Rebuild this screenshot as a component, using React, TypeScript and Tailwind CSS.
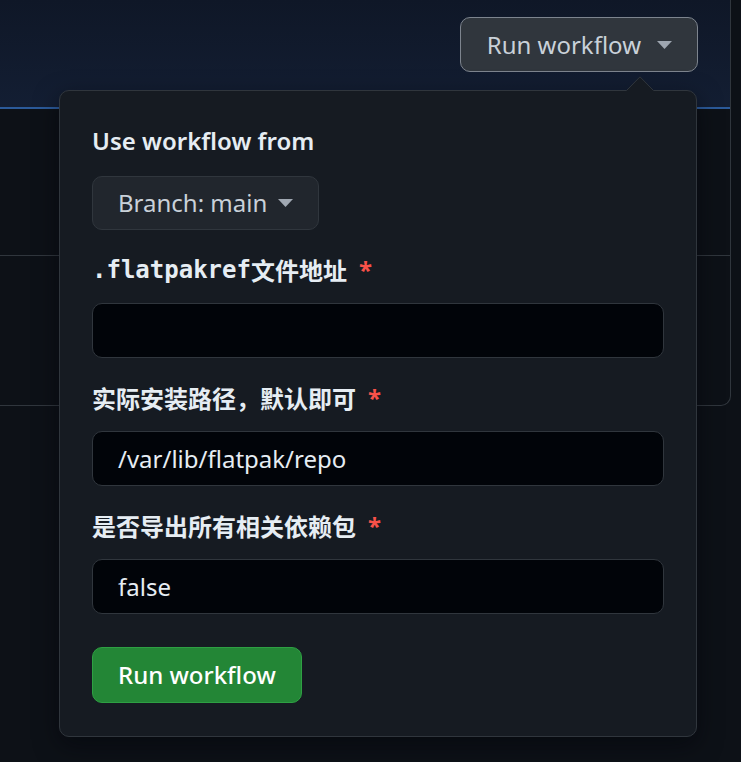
import React from "react";

function Caret({ color = "#8b949e" }: { color?: string }) {
  return (
    <svg width="15" height="8" viewBox="0 0 15 8" className="shrink-0">
      <polygon points="0,0 15,0 7.5,8" fill={color} />
    </svg>
  );
}

function Label({ children }: { children: React.ReactNode }) {
  return (
    <div className="mt-[22px] h-[36px] flex items-center text-[24px] font-bold text-[#e6edf3] leading-[36px] whitespace-nowrap">
      {children}
      <span className="ml-[12px] text-[#f85149]">*</span>
    </div>
  );
}

function Input({ value }: { value?: string }) {
  return (
    <div className="mt-[15px] h-[55px] rounded-[10px] border border-[#30363d] bg-[#010409] pl-[25px] flex items-center text-[24px] text-[#e6edf3]">
      {value}
    </div>
  );
}

export default function App() {
  return (
    <div className="relative w-[741px] h-[762px] overflow-hidden bg-[#0d1117] font-['Noto_Sans','Noto_Sans_CJK_SC',sans-serif]">
      <div className="w-[731px] border-r border-b border-[#30363d] rounded-br-[10px] overflow-hidden">
        <div className="h-[109px] bg-gradient-to-b from-[#0f1727] to-[#131e33] border-b-2 border-[#2b5a9a] flex justify-end items-start pt-[17px] pr-[32px]">
          <div className="h-[55px] rounded-[10px] border border-[#7d848e] bg-[#30363d] pl-[26px] pr-[25px] flex items-center gap-[16px] text-[24px] text-[#c9d1d9] whitespace-nowrap">
            <span>Run workflow</span>
            <Caret color="#9ea6b0" />
          </div>
        </div>
        <div className="h-[147px] border-b border-[#30363d]" />
        <div className="h-[149px]" />
      </div>

      <div className="absolute left-[59px] top-[90px] w-[638px] rounded-[10px] border border-[#30363d] bg-[#161b22] px-[32px] pt-[32px] pb-[33px] shadow-[0_8px_24px_rgba(1,4,9,0.5)]">
        <div className="h-[36px] flex items-center text-[24px] font-semibold text-[#e6edf3]">
          Use workflow from
        </div>
        <div className="flex">
          <div className="mt-[17px] h-[54px] rounded-[10px] border border-[#30363d] bg-[#21262d] px-[25px] flex items-center gap-[11px] text-[24px] text-[#c9d1d9] whitespace-nowrap">
            <span>Branch: main</span>
            <Caret color="#a0a8b2" />
          </div>
        </div>

        <Label>
          <span className="font-['DejaVu_Sans_Mono',monospace]">.flatpakref</span>
          <span className="font-['Noto_Sans_CJK_SC',sans-serif]">文件地址</span>
        </Label>
        <Input />

        <Label>
          <span className="font-['Noto_Sans_CJK_SC',sans-serif]">实际安装路径，默认即可</span>
        </Label>
        <Input value="/var/lib/flatpak/repo" />

        <Label>
          <span className="font-['Noto_Sans_CJK_SC',sans-serif]">是否导出所有相关依赖包</span>
        </Label>
        <Input value="false" />

        <div className="flex">
          <div className="mt-[33px] h-[56px] rounded-[10px] border border-[#2ea043] bg-[#238636] px-[25px] flex items-center text-[24px] font-medium text-white whitespace-nowrap">
            Run workflow
          </div>
        </div>
      </div>

      <svg width="28" height="15" viewBox="0 0 28 15" className="absolute left-[626px] top-[76px]">
        <polygon points="0,15 14,0.5 28,15" fill="#161b22" />
        <polyline points="0.5,14.5 14,0.8 27.5,14.5" fill="none" stroke="#30363d" strokeWidth="1" />
      </svg>
    </div>
  );
}
